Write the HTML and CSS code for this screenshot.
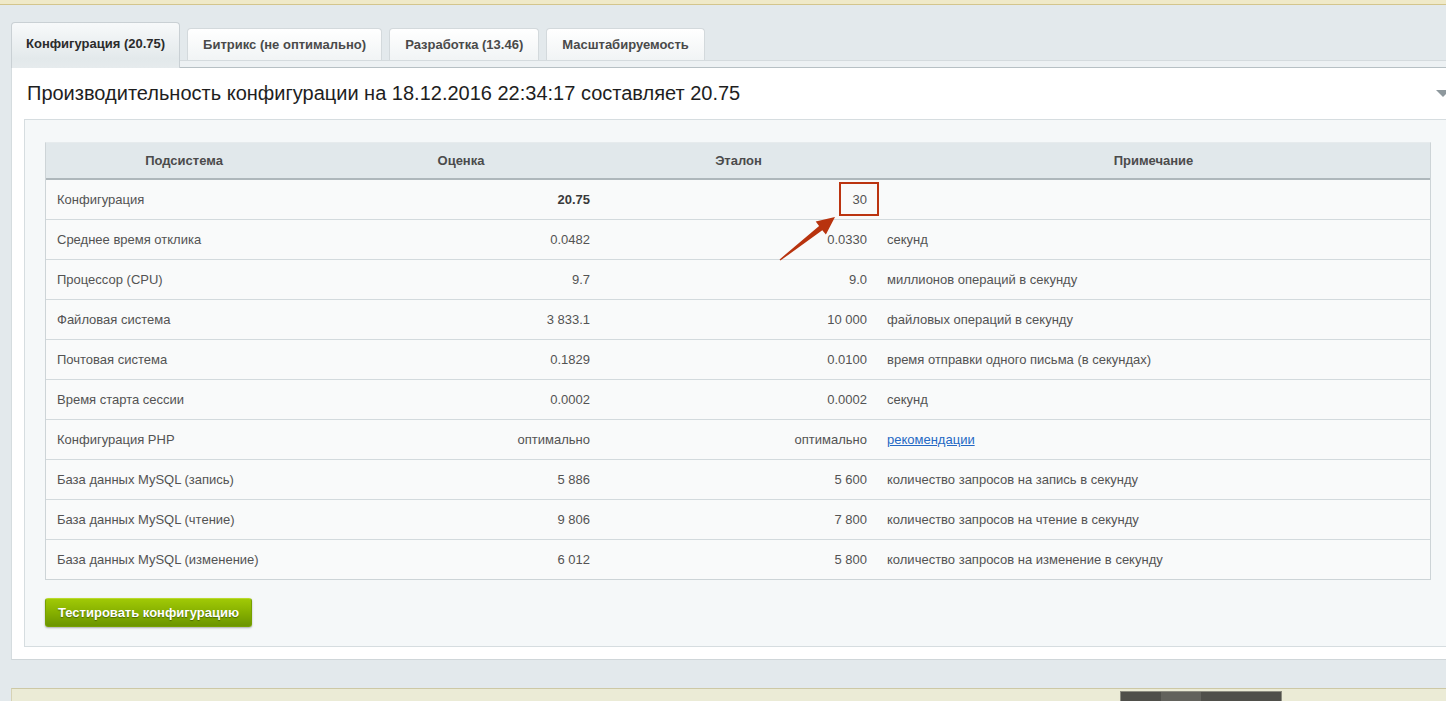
FILE: index.html
```html
<!DOCTYPE html>
<html>
<head>
  <title>Монитор производительности</title>
  <meta charset="utf-8">
  <link rel="stylesheet" href="styles.css">
</head>
<body>
<div class="topbar"></div>

<div class="tabs">
  <div class="tab tab-active">Конфигурация (20.75)</div>
  <div class="tab">Битрикс (не оптимально)</div>
  <div class="tab">Разработка (13.46)</div>
  <div class="tab">Масштабируемость</div>
</div>

<div class="panel">
  <div class="panel-strip"></div>
  <div class="panel-title">
    <h1>Производительность конфигурации на 18.12.2016 22:34:17 составляет 20.75</h1>
    <span class="toggle"></span>
  </div>

  <div class="panel-body">
    <div class="table-wrap">
      <table class="perf">
        <colgroup>
          <col class="c-name">
          <col class="c-mark">
          <col class="c-ref">
          <col>
        </colgroup>
        <thead>
          <tr>
            <th>Подсистема</th>
            <th>Оценка</th>
            <th>Эталон</th>
            <th>Примечание</th>
          </tr>
        </thead>
        <tbody>
          <tr>
            <td>Конфигурация</td>
            <td class="num"><b>20.75</b></td>
            <td class="num">30</td>
            <td></td>
          </tr>
          <tr>
            <td>Среднее время отклика</td>
            <td class="num">0.0482</td>
            <td class="num">0.0330</td>
            <td>секунд</td>
          </tr>
          <tr>
            <td>Процессор (CPU)</td>
            <td class="num">9.7</td>
            <td class="num">9.0</td>
            <td>миллионов операций в секунду</td>
          </tr>
          <tr>
            <td>Файловая система</td>
            <td class="num">3 833.1</td>
            <td class="num">10 000</td>
            <td>файловых операций в секунду</td>
          </tr>
          <tr>
            <td>Почтовая система</td>
            <td class="num">0.1829</td>
            <td class="num">0.0100</td>
            <td>время отправки одного письма (в секундах)</td>
          </tr>
          <tr>
            <td>Время старта сессии</td>
            <td class="num">0.0002</td>
            <td class="num">0.0002</td>
            <td>секунд</td>
          </tr>
          <tr>
            <td>Конфигурация PHP</td>
            <td class="num">оптимально</td>
            <td class="num">оптимально</td>
            <td><a href="#">рекомендации</a></td>
          </tr>
          <tr>
            <td>База данных MySQL (запись)</td>
            <td class="num">5 886</td>
            <td class="num">5 600</td>
            <td>количество запросов на запись в секунду</td>
          </tr>
          <tr>
            <td>База данных MySQL (чтение)</td>
            <td class="num">9 806</td>
            <td class="num">7 800</td>
            <td>количество запросов на чтение в секунду</td>
          </tr>
          <tr>
            <td>База данных MySQL (изменение)</td>
            <td class="num">6 012</td>
            <td class="num">5 800</td>
            <td>количество запросов на изменение в секунду</td>
          </tr>
        </tbody>
      </table>

      <!-- пометка поверх таблицы: рамка вокруг эталона и стрелка -->
      <svg class="annotation" width="860" height="130" viewBox="0 0 860 130">
        <rect x="795" y="41" width="38" height="32" fill="none" stroke="#bb3410" stroke-width="2"/>
        <polygon fill="#b8330e" points="735.4,118.6 777.3,88.3 780.9,92.6 790,75 770.7,79.6 774.1,83.9 734.6,117.4"/>
      </svg>
    </div>

    <button class="btn-test">Тестировать конфигурацию</button>
  </div>
</div>

<div class="footer-bar">
  <div class="dock"><span class="dock-item"></span></div>
</div>
</body>
</html>
```

FILE: styles.css
```css
html, body {
  overflow: hidden;
}

body {
  margin: 0;
  background-color: #e3e9ec;
  font-family: "Liberation Sans", Arial, sans-serif;
  color: #535353;
}

.topbar {
  height: 4px;
  background-color: #efe9c8;
  border-bottom: 1px solid #d3c58c;
}

/* вкладки */
.tabs {
  display: flex;
  align-items: flex-start;
  gap: 7px;
  margin-top: 17px;
  margin-bottom: -8px;
  padding-left: 11px;
}

.tab {
  position: relative;
  z-index: 2;
  box-sizing: border-box;
  height: 32px;
  margin-top: 6px;
  padding: 0 15px;
  line-height: 31px;
  font-size: 13px;
  font-weight: bold;
  color: #4a4a4a;
  background: linear-gradient(#ffffff, #f1f4f5);
  border: 1px solid #d3d9dc;
  border-bottom: none;
  border-radius: 4px 4px 0 0;
  white-space: nowrap;
}

.tab-active {
  height: 46px;
  margin-top: 0;
  padding: 0 14px;
  line-height: 42px;
  color: #2b2b2b;
  background: linear-gradient(#f7f9fa, #e3e9eb 80%, #e6ebed);
  border-color: #c9d0d4;
}

/* основная панель */
.panel {
  margin-left: 11px;
  margin-bottom: 28px;
  background-color: #ffffff;
  border-top: 1px solid #d5dbde;
  border-left: 1px solid #d5dcdf;
  border-bottom: 1px solid #cfd6d9;
}

.panel-strip {
  height: 6px;
  background-color: #edf1f3;
  border-bottom: 1px solid #b7c0c4;
}

.panel-title {
  display: flex;
  align-items: center;
  justify-content: space-between;
  height: 51px;
  padding-left: 15px;
}

.panel-title h1 {
  margin: 0;
  font-size: 20px;
  font-weight: normal;
  color: #1e1e1e;
}

.toggle {
  width: 0;
  height: 0;
  margin-right: -4px;
  border-left: 7px solid transparent;
  border-right: 7px solid transparent;
  border-top: 7px solid #8e989d;
}

.panel-body {
  margin-left: 12px;
  margin-bottom: 12px;
  padding: 22px 15px 19px 20px;
  background-color: #f5f8f9;
  border: 1px solid #d6dde0;
  border-right: none;
}

/* таблица */
.table-wrap {
  position: relative;
}

.perf {
  width: 100%;
  table-layout: fixed;
  border-collapse: separate;
  border-spacing: 0;
  border: 1px solid #cdd4d7;
  border-top-color: #e6ebed;
  font-size: 13px;
  background-color: #f9fafa;
}

.perf .c-name { width: 276px; }
.perf .c-mark { width: 278px; }
.perf .c-ref { width: 277px; }

.perf th {
  height: 35px;
  padding: 0 10px;
  background-color: #e1e8eb;
  border-bottom: 2px solid #aeb7bb;
  font-weight: bold;
  color: #4b4b4b;
  text-align: center;
}

.perf td {
  height: 39px;
  padding: 0 10px;
  border-bottom: 1px solid #d3dadd;
  white-space: nowrap;
}

.perf td:first-child {
  padding-left: 11px;
}

.perf tbody tr:last-child td {
  border-bottom: none;
}

.perf td.num {
  text-align: right;
}

.perf td b {
  color: #3a3a3a;
}

.perf a {
  color: #2468c4;
}

.annotation {
  position: absolute;
  left: 0;
  top: 0;
  pointer-events: none;
}

/* кнопка */
.btn-test {
  display: block;
  height: 29px;
  margin-top: 18px;
  padding: 0 12px;
  font-family: "Liberation Sans", Arial, sans-serif;
  font-size: 13px;
  font-weight: bold;
  color: #ffffff;
  text-shadow: 0 1px 1px rgba(40, 60, 0, 0.6);
  background: linear-gradient(#a0c906, #86b000 50%, #6b9500);
  border: 1px solid #76a000;
  border-top-color: #b9da2a;
  border-radius: 3px;
  box-shadow: 0 1px 2px rgba(0, 0, 0, 0.3);
}

/* нижняя полоса */
.footer-bar {
  display: flex;
  justify-content: flex-end;
  height: 40px;
  margin-left: 11px;
  padding-right: 164px;
  background-color: #ebebd6;
  border-top: 1px solid #cdc8a5;
  border-left: 1px solid #d6d2b5;
}

.dock {
  width: 160px;
  height: 40px;
  margin-top: 2px;
  background-color: #4f4f4a;
  border: 1px solid #8b8b80;
}

.dock-item {
  display: block;
  width: 40px;
  height: 40px;
  margin-left: 40px;
  background-color: #62625c;
}
```
